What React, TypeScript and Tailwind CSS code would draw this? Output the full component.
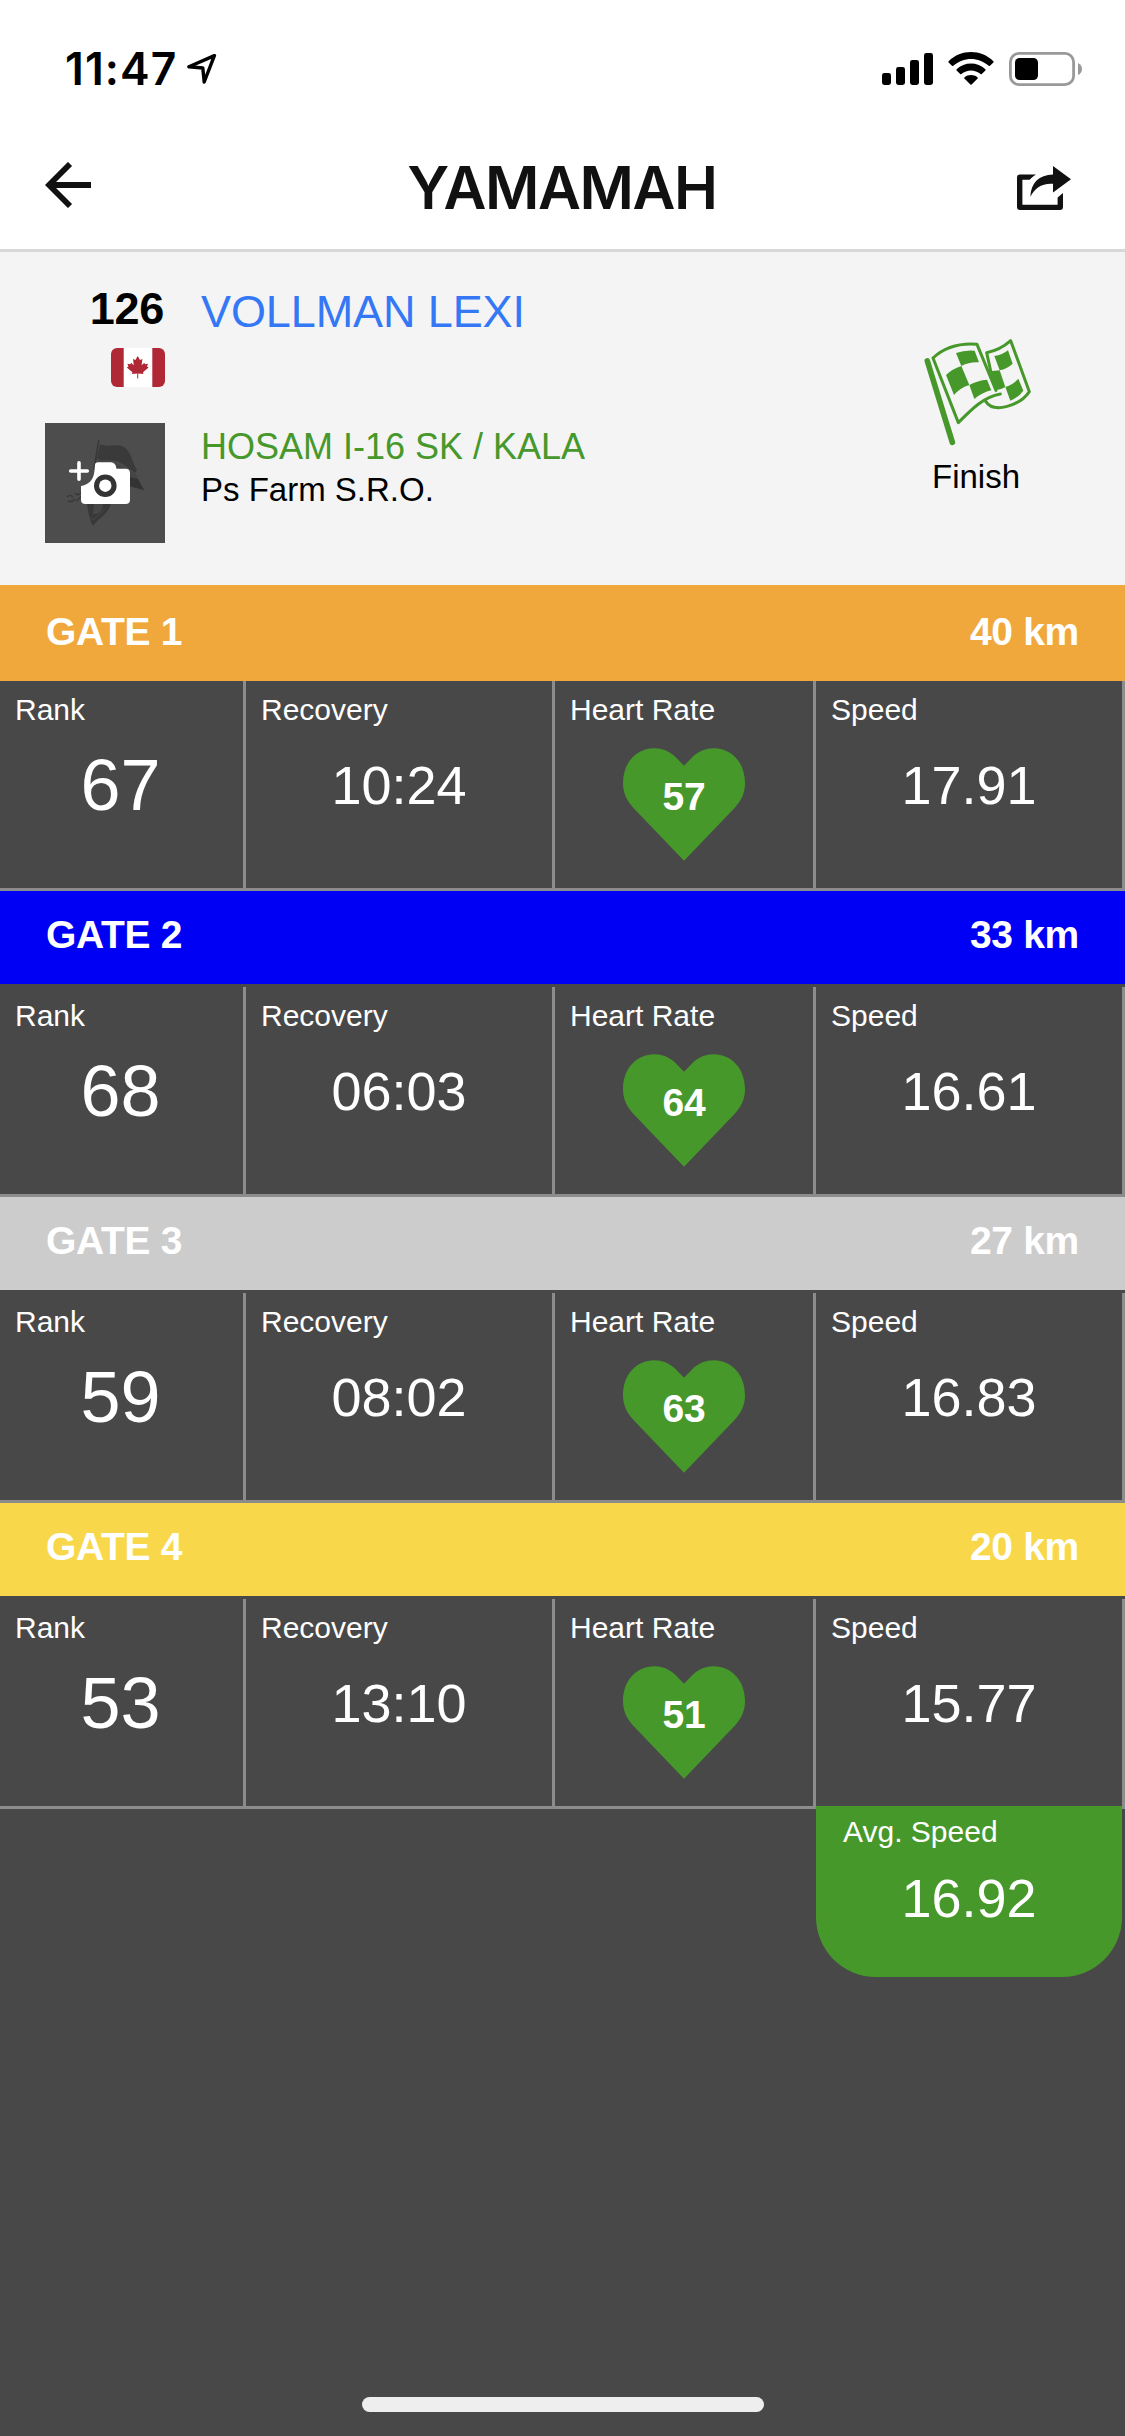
import clsx from "clsx";

const gates = [
  {
    id: 1,
    distance: "40 km",
    color: "bg-[#f0a83c]",
    rank: 67,
    recovery: "10:24",
    heartRate: 57,
    speed: "17.91",
  },
  {
    id: 2,
    distance: "33 km",
    color: "bg-[#0000f5]",
    rank: 68,
    recovery: "06:03",
    heartRate: 64,
    speed: "16.61",
  },
  {
    id: 3,
    distance: "27 km",
    color: "bg-[#cccccc]",
    rank: 59,
    recovery: "08:02",
    heartRate: 63,
    speed: "16.83",
  },
  {
    id: 4,
    distance: "20 km",
    color: "bg-[#f8d84a]",
    rank: 53,
    recovery: "13:10",
    heartRate: 51,
    speed: "15.77",
  },
];

const StatusBar = () => (
  <div className="flex h-[132px] items-start justify-between pt-[52px] pr-[43px] pl-[65px]">
    <div className="flex items-start">
      <span className="w-[122px] font-['Inter'] text-[44.5px] leading-[34px] font-semibold tracking-[1.1px] whitespace-nowrap text-black">
        11:47
      </span>
      <svg className="mt-px h-[31px] w-[30px]" viewBox="0 0 30 31" fill="none">
        <path
          d="M27.4 2.6 L1.9 13.8 L15.8 15 L17.2 29 Z"
          stroke="#000"
          strokeWidth="3.4"
          strokeLinejoin="round"
        />
      </svg>
    </div>
    <div className="flex items-start">
      <svg className="mt-px h-[32px] w-[51px]" viewBox="0 0 51 32">
        <rect x="0" y="20" width="9" height="12" rx="2.4" />
        <rect x="14" y="14" width="9" height="18" rx="2.4" />
        <rect x="28" y="7" width="9" height="25" rx="2.4" />
        <rect x="42" y="0" width="9" height="32" rx="2.4" />
      </svg>
      <svg className="ml-[15px] h-[33px] w-[46px]" viewBox="0 0 46 33">
        <path d="M0.6 9.2 C13 -3 33 -3 45.4 9.2 Q45.8 9.8 45.4 10.4 L42 13.8 Q41.4 14.4 40.7 13.8 C30.6 4.6 15.4 4.6 5.3 13.8 Q4.6 14.4 4 13.8 L0.6 10.4 Q0.2 9.8 0.6 9.2 Z" />
        <path d="M8.6 17.3 C16.4 9.4 29.6 9.4 37.4 17.3 Q37.9 18 37.4 18.6 L33.8 22 Q33.2 22.6 32.6 22 C27 17.2 19 17.2 13.4 22 Q12.8 22.6 12.2 22 L8.6 18.6 Q8.1 18 8.6 17.3 Z" />
        <path d="M16.4 25.4 C20.2 22.2 25.8 22.2 29.6 25.4 Q30 26 29.6 26.5 L23.6 32.5 Q23 33 22.4 32.5 L16.4 26.5 Q16 26 16.4 25.4 Z" />
      </svg>
      <svg className="ml-[15px] h-[34px] w-[73px]" viewBox="0 0 73 34">
        <rect x="1.4" y="1.4" width="63.2" height="31.2" rx="8.6" fill="none" stroke="#999" strokeWidth="2.8" />
        <rect x="6" y="6" width="23" height="22" rx="4.6" />
        <path d="M69 11 Q73 13 73 17 Q73 21 69 23 Z" fill="#999" />
      </svg>
    </div>
  </div>
);

const NavBar = () => (
  <div className="flex h-[117px] items-start justify-between pr-[54px] pl-[45px]">
    <svg className="mt-[30px] h-[46px] w-[56px]" viewBox="0 0 56 46" fill="none">
      <path d="M46 23 H4 M25 2 L4 23 L25 44" stroke="#111" strokeWidth="5.8" />
    </svg>
    <h1 className="pt-[20px] pl-[8px] font-['Inter'] text-[59px] leading-[72px] font-semibold tracking-[-1.4px] text-[#111]">
      YAMAMAH
    </h1>
    <svg className="mt-[33px] h-[46px] w-[56px]" viewBox="0 0 56 46" fill="#111">
      <path d="M21 9.5 H5 Q2 9.5 2 12.5 V42 Q2 45 5 45 H45 Q48 45 48 42 V28 L42.6 32.6 V39.8 H7.4 V14.8 H14.6 Q17 12 21 9.5 Z" />
      <path d="M38 1 L56 14.3 L38 27.4 V18.8 C27 18 19.5 23 15.4 32 C15.8 17.5 24 9.8 38 9.4 Z" />
    </svg>
  </div>
);

const CanadaFlag = () => (
  <svg className="h-[39px] w-[54px] rounded-[6px]" viewBox="0 0 54 39">
    <rect width="54" height="39" fill="#fff" />
    <rect width="12.7" height="39" fill="#b02735" />
    <rect x="41.3" width="12.7" height="39" fill="#b02735" />
    <path
      d="M26.7 8 L29 12 L31.4 11 L30.6 17.2 L33.3 14.7 L34 16.3 L37 15.8 L36 18.6 L37.6 19.6 L32 24.3 L32.4 26 L27.2 25.5 V30.6 H26.2 V25.5 L21 26 L21.4 24.3 L15.8 19.6 L17.4 18.6 L16.4 15.8 L19.4 16.3 L20.1 14.7 L22.8 17.2 L22 11 L24.4 12 Z"
      fill="#b02735"
    />
  </svg>
);

const AddPhoto = () => (
  <svg className="h-[120px] w-[120px] bg-[#4d4d4d]" viewBox="0 0 120 120">
    {/* faded horse and banner behind the camera */}
    <path d="M53 17 L54.5 17 L50 47 L48 47 Z" fill="#383838" />
    <path d="M55 21 C63 25 71 20 79 24 C86 28 86 37 92 47 L90 50 C82 44 76 39 70 38 C63 37 57 38 52 36 Z" fill="#3a3a3a" />
    <path d="M53 37 C67 36 80 44 92 52 C93 58 96 62 98 67 L80 62 L60 52 L50 47 Z" fill="#454545" />
    <path d="M84 54 L93 56 L99 67 L84 63 Z" fill="#333" />
    <path d="M22 74 Q25 71 28 74 M23 78 Q27 80 30 76 M30 70 Q34 74 37 68 M31 78 L37 73" fill="none" stroke="#3a3a3a" strokeWidth="1.6" />
    <path d="M42 80 L66 80 C64 91 54 94 48 103 C45 98 43 90 42 80 Z" fill="#383838" />
    <path d="M49 81 L58 81 C58 88 54 91 48 91 Z" fill="#474747" />
    <path d="M45 94 L48 97 L60 86" fill="none" stroke="#484848" />
    <circle cx="60.3" cy="62.7" r="13" fill="#333" />
    <path
      fillRule="evenodd"
      d="M50 42 Q50 39.3 53 39.3 H66 Q69 39.3 70.5 42 L71.5 45.7 H80.5 Q85 45.7 85 50 V76.7 Q85 81 80.5 81 H40.5 Q36 81 36 76.7 V63 C43 62 48.5 57 49.3 49 Z M60.3 51.4 A11.3 11.3 0 1 0 60.3 74 A11.3 11.3 0 1 0 60.3 51.4 Z"
      fill="#fff"
    />
    <circle cx="60.3" cy="62.7" r="6.2" fill="#fff" />
    <path d="M34 39.7 V56.3 M25.7 48 H42.3" stroke="#fff" strokeWidth="3.6" strokeLinecap="round" />
  </svg>
);

const FinishFlag = () => (
  <svg className="ml-[2px] h-[110px] w-[110px]" viewBox="185 110 330 330" fill="none">
    <path d="M201 182 L276 426" stroke="#47982b" strokeWidth="17" strokeLinecap="round" />
    <path
      d="M218 173 C255 139 300 128 350 132 L407 270 M218 173 L294 367 C335 325 370 290 420 281"
      stroke="#47982b"
      strokeWidth="9"
      strokeLinecap="round"
      strokeLinejoin="round"
    />
    <path
      d="M391 212 L379 157 Q420 149 451 121 L507 274 C480 315 400 341 376 303"
      stroke="#47982b"
      strokeWidth="9"
      strokeLinecap="round"
      strokeLinejoin="round"
    />
    <g fill="#47982b">
      <path d="M287 158 Q315 148 343 151 L356 186 Q328 184 303 197 Z" />
      <path d="M257 224 Q275 206 303 197 L327 254 Q300 262 281 284 Z" />
      <path d="M327 254 Q352 240 380 238 L393 270 Q366 276 342 296 Z" />
      <path d="M402 167 Q426 164 443 150 L457 190 Q440 206 418 210 Z" />
      <path d="M388 213 L418 210 L435 260 Q422 268 406 270 Z" />
      <path d="M435 260 Q458 254 474 235 L489 271 Q475 291 450 301 Z" />
    </g>
  </svg>
);

const Heart = ({ rate }: { rate: number }) => (
  <div className="relative mx-auto mt-[20px] h-[113px] w-[122px]">
    <svg className="h-[113px] w-[122px]" viewBox="0 0 122 113">
      <path
        d="M61 17.7 L52 8.5 C46 3 39 0.2 31.5 0.2 C13 0.2 0 15 0 35 C0 45 4 53 10.5 60 L61 112.8 L111.5 60 C118 53 122 45 122 35 C122 15 109 0.2 90.5 0.2 C83 0.2 76 3 70 8.5 Z"
        fill="#47982b"
      />
    </svg>
    <span className="absolute inset-x-0 top-[25px] text-center text-[39px] leading-[48px] font-bold tracking-[-0.3px]">
      {rate}
    </span>
  </div>
);

const Label = ({ children }: { children: string }) => (
  <div className="pl-[15px] text-[30px] leading-[36px]">{children}</div>
);

const cell = "h-[210px] border-r-[3px] border-b-[3px] border-[#8c8c8c] pt-[11px]";
const value = "mt-[21px] text-center text-[54px] leading-[72px]";

export default function App() {
  return (
    <div className="flex h-[2436px] w-[1125px] flex-col overflow-hidden bg-[#484848] font-['Liberation_Sans',sans-serif] text-white">
      <header className="h-[252px] border-b-[3px] border-[#d8d8d8] bg-white">
        <StatusBar />
        <NavBar />
      </header>

      <section className="flex h-[333px] items-start bg-[#f4f4f4] pl-[45px] text-black">
        <div className="flex w-[120px] flex-col items-end pt-[33px]">
          <div className="pr-px text-[45px] leading-[48px] font-bold tracking-[-0.3px]">126</div>
          <div className="mt-[15px] mb-[36px]">
            <CanadaFlag />
          </div>
          <AddPhoto />
        </div>
        <div className="flex-1 pt-[36px] pl-[36px]">
          <div className="text-[45px] leading-[48px] tracking-[-0.1px] text-[#3478f6]">VOLLMAN LEXI</div>
          <div className="mt-[90px] text-[36px] leading-[42px] text-[#47982b]">
            HOSAM I-16 SK / KALA
          </div>
          <div className="mt-px text-[33px] leading-[42px]">Ps Farm S.R.O.</div>
        </div>
        <div className="flex w-[298px] flex-col items-center pt-[85px]">
          <FinishFlag />
          <div className="mt-[9px] text-[33px] leading-[42px]">Finish</div>
        </div>
      </section>

      {gates.map((gate) => (
        <section key={gate.id}>
          <div
            className={clsx(
              "flex items-center justify-between px-[46px] text-[39px] leading-[42px] font-bold tracking-[-0.3px]",
              gate.id === 1 ? "h-[96px] pb-[3px]" : "mb-[3px] h-[93px] pb-[6px]",
              gate.color
            )}
          >
            <span>GATE {gate.id}</span>
            <span>{gate.distance}</span>
          </div>
          <div className="grid grid-cols-[246px_309px_261px_309px]">
            <div className={cell}>
              <Label>Rank</Label>
              <div className="mt-[21px] pr-[2px] text-center text-[72px] leading-[72px]">
                {gate.rank}
              </div>
            </div>
            <div className={cell}>
              <Label>Recovery</Label>
              <div className={value}>{gate.recovery}</div>
            </div>
            <div className={cell}>
              <Label>Heart Rate</Label>
              <Heart rate={gate.heartRate} />
            </div>
            <div className={cell}>
              <Label>Speed</Label>
              <div className={value}>{gate.speed}</div>
            </div>
          </div>
        </section>
      ))}

      {/* sits over the bottom border of the last speed cell */}
      <div className="relative -mt-[3px] mr-[3px] h-[171px] w-[306px] self-end rounded-b-[60px] bg-[#47982b] pt-[8px]">
        <div className="pl-[27px] text-[30px] leading-[36px]">Avg. Speed</div>
        <div className="mt-[12px] text-center text-[54px] leading-[72px]">16.92</div>
      </div>

      <div className="mx-auto mt-auto mb-[24px] h-[15px] w-[402px] rounded-full bg-[#eeeeee]" />
    </div>
  );
}
